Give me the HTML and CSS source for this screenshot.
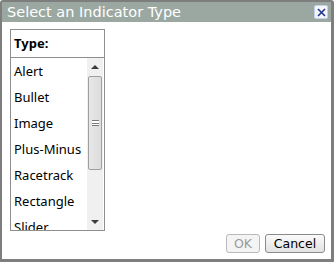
FILE: index.html
```html
<!DOCTYPE html>
<html lang="en">
  <head>
    <meta charset="UTF-8" />
    <title>Select an Indicator Type</title>
    <link rel="stylesheet" href="styles.css">
  </head>
  <body>
    <div class="dialog">
      <div class="titlebar">
        <span class="title">Select an Indicator Type</span>
        <button class="close" aria-label="Close">
          <svg width="9" height="9" viewBox="0 0 9 9">
            <path d="M1 1 L8 8 M8 1 L1 8" stroke="#22348c" stroke-width="1.6" fill="none" />
          </svg>
        </button>
      </div>

      <div class="content">
        <div class="listbox">
          <div class="list-header">Type:</div>
          <div class="list-body">
            <ul class="items">
              <li>Alert</li>
              <li>Bullet</li>
              <li>Image</li>
              <li>Plus-Minus</li>
              <li>Racetrack</li>
              <li>Rectangle</li>
              <li>Slider</li>
            </ul>
            <div class="scrollbar">
              <div class="arrow up"></div>
              <div class="track">
                <div class="thumb"><span class="grip"></span></div>
              </div>
              <div class="arrow down"></div>
            </div>
          </div>
        </div>
      </div>

      <div class="footer">
        <button class="btn ok" disabled>OK</button>
        <button class="btn">Cancel</button>
      </div>
    </div>
  </body>
</html>
```

FILE: styles.css
```css
* {
  margin: 0;
  padding: 0;
  box-sizing: border-box;
}

body {
  background-color: #ffffff;
  font-family: "DejaVu Sans", Verdana, sans-serif;
}

.dialog {
  width: 334px;
  height: 262px;
  display: flex;
  flex-direction: column;
  border: 2px solid #7e7e7e;
  border-right-width: 3px;
  border-bottom-width: 3px;
  border-radius: 3px 3px 0 0;
  background-color: #ffffff;
}

.titlebar {
  height: 20px;
  background-color: #9ba8a2;
  display: flex;
  align-items: center;
  justify-content: space-between;
  padding: 0 3px 0 5px;
}

.title {
  color: #ffffff;
  font-size: 14.5px;
}

.close {
  width: 14px;
  height: 14px;
  border: 1px solid #c3d0e8;
  border-radius: 2px;
  background-color: #f4f6fb;
  display: flex;
  align-items: center;
  justify-content: center;
}

.content {
  flex: 1;
  padding: 7px 0 0 8px;
  font-family: "Noto Sans", "Open Sans", sans-serif;
}

.listbox {
  width: 95px;
  height: 202px;
  border: 1px solid #8e8e8e;
  display: flex;
  flex-direction: column;
}

.list-header {
  height: 28px;
  border-bottom: 1px solid #8e8e8e;
  font-weight: bold;
  font-size: 13px;
  padding: 4px 0 0 3px;
  color: #000000;
}

.list-body {
  flex: 1;
  display: flex;
  overflow: hidden;
}

.items {
  list-style: none;
  flex: 1;
  overflow: hidden;
}

.items li {
  height: 26px;
  line-height: 26px;
  font-size: 13px;
  padding-left: 3px;
  color: #000000;
  white-space: nowrap;
}

.scrollbar {
  width: 16px;
  margin-right: 1px;
  display: flex;
  flex-direction: column;
  background-color: #f0f0f0;
}

.arrow {
  height: 17px;
  display: flex;
  align-items: center;
  justify-content: center;
}

.arrow::after {
  content: "";
  border-left: 4px solid transparent;
  border-right: 4px solid transparent;
}

.arrow.up::after {
  border-bottom: 4px solid #3c3c3c;
}

.arrow.down::after {
  border-top: 4px solid #3c3c3c;
}

.track {
  flex: 1;
  padding-top: 1px;
}

.thumb {
  height: 94px;
  margin: 0 1px;
  border: 1px solid #9f9f9f;
  border-radius: 2px;
  background: linear-gradient(to right, #e8e8e8, #dcdcdc);
  display: flex;
  align-items: center;
  justify-content: center;
}

.grip {
  width: 7px;
  height: 6px;
  border-top: 1px solid #7a7a7a;
  border-bottom: 1px solid #7a7a7a;
  background: linear-gradient(#ffffff 2px, #7a7a7a 2px, #7a7a7a 3px, #ffffff 3px);
}

.footer {
  height: 28px;
  display: flex;
  justify-content: flex-end;
  align-items: flex-start;
  gap: 5px;
  padding: 3px 6px 0 0;
}

.btn {
  height: 19px;
  width: 60px;
  border: 1px solid #8a8a8a;
  border-radius: 3px;
  background: linear-gradient(#fafafa, #e2e2e2);
  font-family: "DejaVu Sans", Verdana, sans-serif;
  font-size: 12.5px;
  color: #000000;
}

.btn.ok {
  width: 34px;
  color: #9a9a9a;
  border-color: #b9b9b9;
  background: #f4f4f4;
}
```
